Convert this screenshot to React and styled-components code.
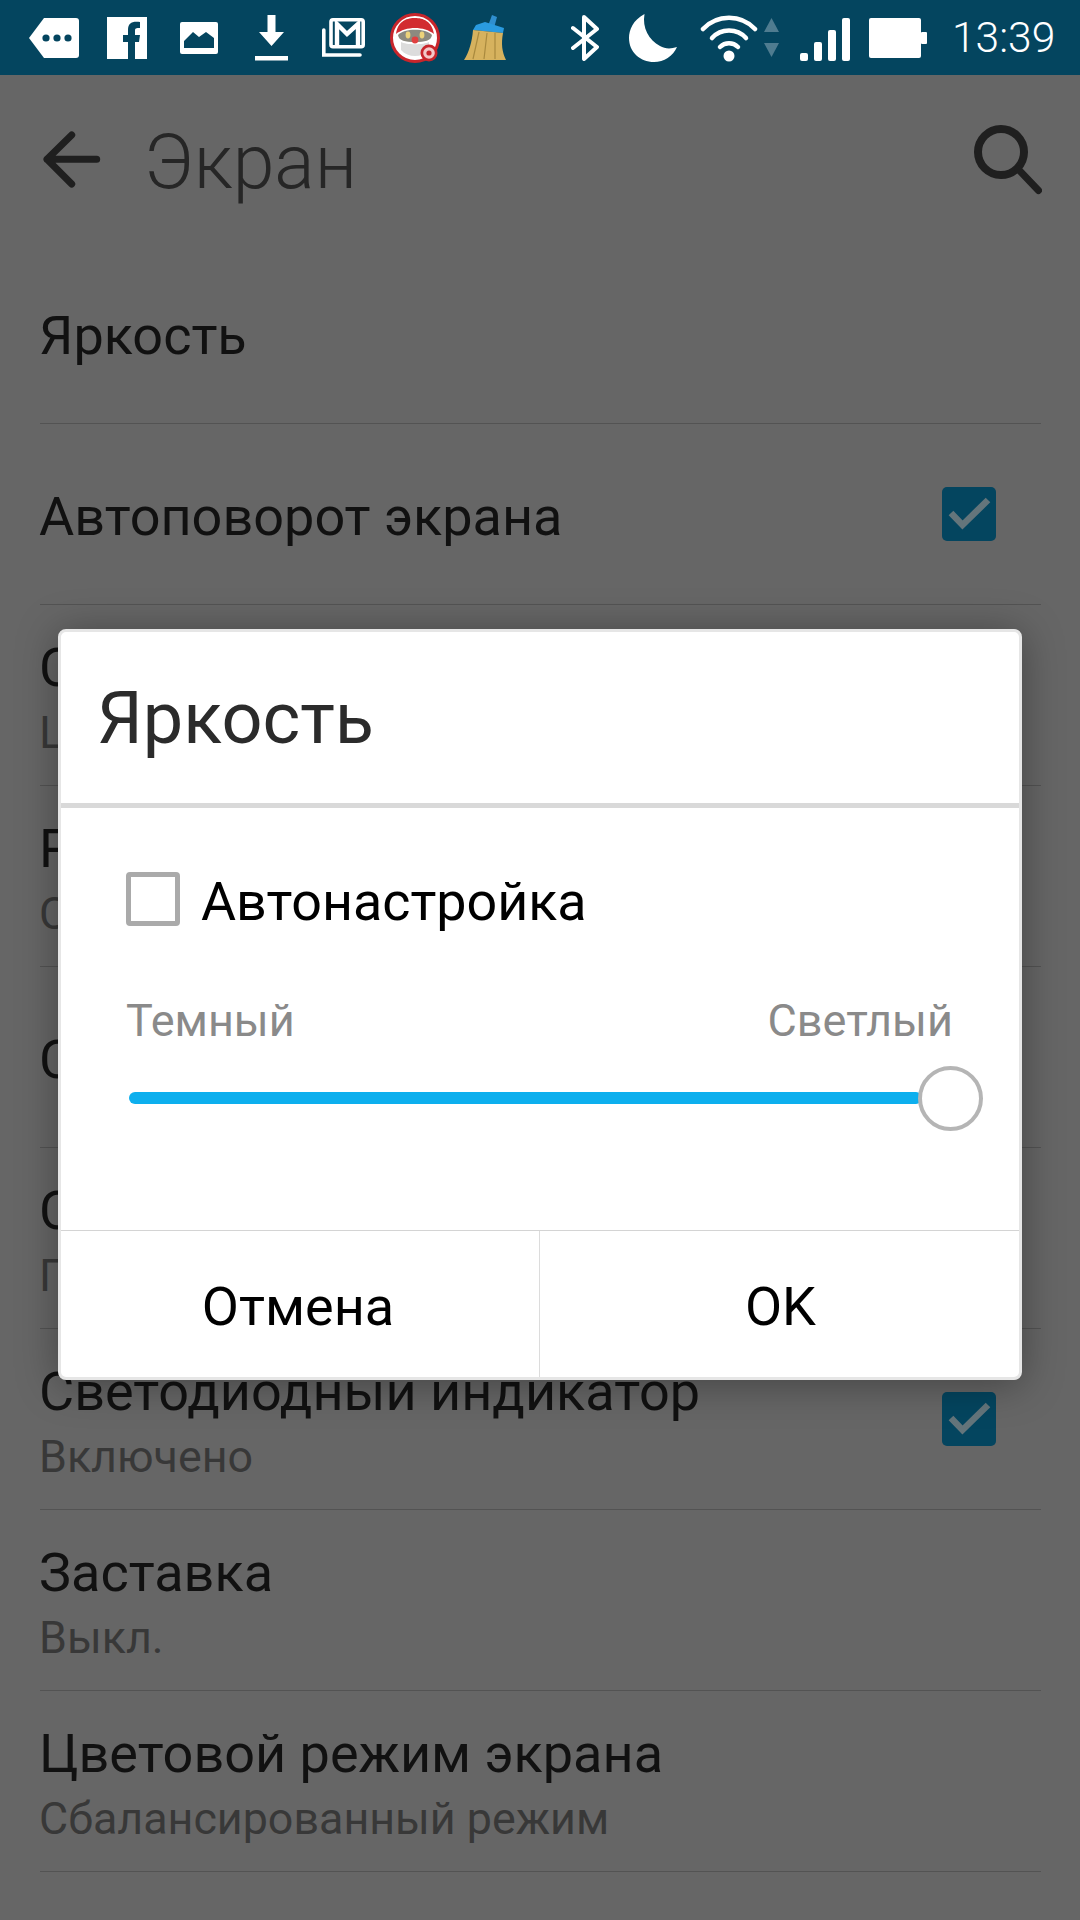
import styled, { createGlobalStyle } from 'styled-components';

const GlobalStyle = createGlobalStyle`
  html, body {
    margin: 0;
    padding: 0;
    background: #666666;
  }
  * {
    box-sizing: border-box;
  }
`;

const settings = [
  { title: 'Яркость' },
  { title: 'Автоповорот экрана', checked: true },
  { title: 'Спящий режим', sub: 'Ц' },
  { title: 'Размер шрифта', sub: 'Средний' },
  { title: 'Сон' },
  { title: 'Стиль', sub: 'По умолчанию' },
  { title: 'Светодиодный индикатор', sub: 'Включено', checked: true },
  { title: 'Заставка', sub: 'Выкл.' },
  { title: 'Цветовой режим экрана', sub: 'Сбалансированный режим' },
];

const BackIcon = () => (
  <svg width="60" height="60" viewBox="0 0 60 60" fill="none" stroke="#1f1f1f" strokeWidth="7" strokeLinecap="round" strokeLinejoin="round">
    <path d="M29.7 6 L5 30.3 L29.7 55 M5 30.3 H54.7" />
  </svg>
);

const SearchIcon = () => (
  <svg width="72" height="72" viewBox="0 0 72 72" fill="none" stroke="#1f1f1f" strokeLinecap="round">
    <circle cx="31" cy="29" r="23" strokeWidth="8" />
    <path d="M48 46 L68.5 67.5" strokeWidth="7" />
  </svg>
);

const CheckIcon = () => (
  <svg width="54" height="54" viewBox="0 0 54 54" fill="none">
    <rect width="54" height="54" rx="5" fill="#04455f" />
    <path d="M9 26 L20.5 38 L46 13" stroke="#64757b" strokeWidth="6.5" />
  </svg>
);

const TagIcon = () => (
  <svg width="50" height="40" viewBox="0 0 50 40" fill="#fff">
    <path d="M15 0 H47 a3 3 0 0 1 3 3 V37 a3 3 0 0 1 -3 3 H15 L0 20 Z" />
    <circle cx="17" cy="20" r="3.6" fill="#04455f" />
    <circle cx="28" cy="20" r="3.6" fill="#04455f" />
    <circle cx="39" cy="20" r="3.6" fill="#04455f" />
  </svg>
);

const FacebookIcon = () => (
  <svg width="40" height="42" viewBox="0 0 40 42">
    <rect width="40" height="42" fill="#fff" />
    <path d="M21 42 V25 H16 V18 H21 V13 C21 6 25 4 33 5 V11 C29 11 28 11 28 14 V18 H33 L32 25 H28 V42 Z" fill="#04455f" />
  </svg>
);

const PhotoIcon = () => (
  <svg width="38" height="32" viewBox="0 0 38 32">
    <rect width="38" height="32" rx="2" fill="#fff" />
    <path d="M4 26 V19 L13 10 L19 15 L26 10 L34 16 V26 Z" fill="#04455f" />
  </svg>
);

const DownloadIcon = () => (
  <svg width="33" height="46" viewBox="0 0 33 46" fill="#fff">
    <path d="M12.5 0 H20.5 V17 H29 L16.5 31 L4 17 H12.5 Z" />
    <rect y="41" width="33" height="4.5" />
  </svg>
);

const MailIcon = () => (
  <svg width="43" height="39" viewBox="0 0 43 39" fill="none" stroke="#fff" strokeWidth="3.6">
    <rect x="9" y="1.8" width="32.2" height="27" rx="2" />
    <path d="M1.8 12 V37 H38" strokeLinecap="round" />
    <path d="M15 27 V6 L25 16 L36 6 V27" strokeWidth="4.4" />
  </svg>
);

const RobotIcon = () => (
  <svg width="50" height="52" viewBox="0 0 50 52">
    <circle cx="25" cy="26" r="23.5" fill="#fff" stroke="#c8252b" strokeWidth="3" />
    <path d="M6 22 C8 8 18 6 25 6 C33 6 42 9 44 22 C34 14 16 14 6 22 Z" fill="#d22b30" />
    <path d="M8 23 C14 16 36 16 42 23 C41 29 35 30 25 30 C15 30 9 29 8 23 Z" fill="#8c8a80" />
    <ellipse cx="18" cy="23" rx="2.4" ry="3.4" fill="#ecd27a" />
    <ellipse cx="32" cy="23" rx="2.4" ry="3.4" fill="#ecd27a" />
    <path d="M11 30 C16 33 34 33 39 30 V38 C32 46 18 46 11 38 Z" fill="#dcdcdc" />
    <circle cx="25" cy="28" r="3.4" fill="#e04040" />
    <circle cx="39" cy="41" r="8.5" fill="#c8252b" />
    <circle cx="39" cy="41" r="5.8" fill="#f3c8c8" />
    <circle cx="39" cy="41" r="2.6" fill="#c8252b" />
  </svg>
);

const BroomIcon = () => (
  <svg width="42" height="46" viewBox="0 0 42 46">
    <path d="M28 0 L33 2 L30 13 L24 11 Z" fill="#2f8fd0" />
    <path d="M12 10 L21 7 L40 13 L39 18 L9 15 Z" fill="#2a9be0" />
    <path d="M9 15 L39 18 C37 29 38 37 42 45 H0 C5 37 8 27 9 15 Z" fill="#d6b25e" />
    <path d="M15 17 L9 44 M23 18 L20 44 M31 18 L31 44" stroke="#a98a3e" strokeWidth="1.2" fill="none" />
  </svg>
);

const BluetoothIcon = () => (
  <svg width="28" height="46" viewBox="0 0 28 46" fill="none" stroke="#fff" strokeWidth="4" strokeLinecap="round" strokeLinejoin="round">
    <path d="M2 13 L26 32 L13 44 V2 L26 14 L2 33" />
  </svg>
);

const MoonIcon = () => (
  <svg width="48" height="48" viewBox="0 0 48 48" fill="#fff">
    <path d="M15.5 0 C4 6 0 16 0 24 C0 38 11 48 25 48 C35 48 44 42 48 33 C42 35 36 35 31 32 C20 26 13 14 15.5 0 Z" />
  </svg>
);

const WifiIcon = () => (
  <svg width="58" height="48" viewBox="0 0 58 48" fill="none" stroke="#fff" strokeWidth="4.5" strokeLinecap="round">
    <path d="M3 15 C17 0 41 0 55 15" />
    <path d="M12 24 C21 14 37 14 46 24" />
    <path d="M20 33 C25 28 33 28 38 33" />
    <circle cx="29" cy="42" r="5.5" fill="#fff" stroke="none" />
  </svg>
);

const ArrowsIcon = () => (
  <svg width="15" height="39" viewBox="0 0 15 39" fill="#4f7c90">
    <path d="M7.5 0 L15 14 H0 Z" />
    <path d="M7.5 39 L0 25 H15 Z" />
  </svg>
);

const SignalIcon = () => (
  <svg width="50" height="43" viewBox="0 0 50 43" fill="#fff">
    <rect x="0" y="35" width="8" height="8" rx="2" />
    <rect x="14" y="24" width="8" height="19" rx="2" />
    <rect x="28" y="12" width="8" height="31" rx="2" />
    <rect x="42" y="0" width="8" height="43" rx="2" />
  </svg>
);

const BatteryIcon = () => (
  <svg width="58" height="40" viewBox="0 0 58 40" fill="#fff">
    <rect width="52" height="40" rx="2" />
    <rect x="52" y="14" width="6" height="12" rx="1" />
  </svg>
);

const App = () => (
  <>
    <GlobalStyle />
    <Phone>
      <StatusBar>
        <StatusSlot $gap={0}><TagIcon /></StatusSlot>
        <StatusSlot $gap={28}><FacebookIcon /></StatusSlot>
        <StatusSlot $gap={33}><PhotoIcon /></StatusSlot>
        <StatusSlot $gap={37}><DownloadIcon /></StatusSlot>
        <StatusSlot $gap={34}><MailIcon /></StatusSlot>
        <StatusSlot $gap={25}><RobotIcon /></StatusSlot>
        <StatusSlot $gap={24}><BroomIcon /></StatusSlot>
        <StatusSlot $gap={65}><BluetoothIcon /></StatusSlot>
        <StatusSlot $gap={30}><MoonIcon /></StatusSlot>
        <StatusSlot $gap={23}><WifiIcon /></StatusSlot>
        <StatusSlot $gap={6}><ArrowsIcon /></StatusSlot>
        <StatusSlot $gap={21} $drop={4}><SignalIcon /></StatusSlot>
        <StatusSlot $gap={19}><BatteryIcon /></StatusSlot>
        <Clock>13:39</Clock>
      </StatusBar>
      <Header>
        <BackIcon />
        <HeaderTitle>Экран</HeaderTitle>
        <SearchIcon />
      </Header>
      <SettingsList>
        {settings.map(item => (
          <SettingRow key={item.title}>
            <RowText>
              <RowTitle>{item.title}</RowTitle>
              {item.sub && <RowSub>{item.sub}</RowSub>}
            </RowText>
            {item.checked && <CheckIcon />}
          </SettingRow>
        ))}
      </SettingsList>
      <Dialog>
        <DialogTitle>Яркость</DialogTitle>
        <DialogBody>
          <AutoRow>
            <EmptyBox />
            <AutoLabel>Автонастройка</AutoLabel>
          </AutoRow>
          <SliderLabels>
            <span>Темный</span>
            <span>Светлый</span>
          </SliderLabels>
          <Slider>
            <SliderTrack />
            <SliderThumb />
          </Slider>
        </DialogBody>
        <DialogButtons>
          <DialogButton $shift={-2}>Отмена</DialogButton>
          <DialogButton $shift={1}>OK</DialogButton>
        </DialogButtons>
      </Dialog>
    </Phone>
  </>
);

const Phone = styled.div`
  position: relative;
  width: 1080px;
  height: 1920px;
  overflow: hidden;
  background: #666666;
  font-family: Roboto, 'Noto Sans', sans-serif;
`;

const StatusBar = styled.div`
  display: flex;
  align-items: center;
  height: 75px;
  padding-left: 29px;
  background: #04455f;
`;

const StatusSlot = styled.div`
  display: flex;
  margin-left: ${props => props.$gap}px;
  margin-top: ${props => props.$drop || 0}px;
`;

const Clock = styled.span`
  margin-left: 25px;
  color: #fff;
  font-size: 42.5px;
  font-weight: 300;
`;

const Header = styled.div`
  display: flex;
  align-items: center;
  height: 168px;
  padding: 0 38px 0 42px;
`;

const HeaderTitle = styled.h1`
  flex: 1;
  margin: 6px 0 0 42px;
  color: #262626;
  font-size: 75.2px;
  font-weight: 300;
`;

const SettingsList = styled.div`
  padding: 0 39px 0 40px;
`;

const SettingRow = styled.div`
  display: flex;
  align-items: center;
  justify-content: space-between;
  height: 181px;
  padding-right: 45px;
  border-bottom: 1px solid #535353;
`;

const RowText = styled.div`
  margin-left: -1px;
  padding-top: 6px;
`;

const RowTitle = styled.div`
  color: #111;
  font-size: 54px;
  line-height: 62px;
`;

const RowSub = styled.div`
  margin-top: 7px;
  color: #383838;
  font-size: 44.8px;
  line-height: 54px;
`;

const Dialog = styled.div`
  position: absolute;
  top: 629px;
  left: 58px;
  display: flex;
  flex-direction: column;
  width: 964px;
  height: 751px;
  overflow: hidden;
  border: 3px solid #e6e6e6;
  border-radius: 8px;
  background: #fff;
  box-shadow: 0 4px 40px rgba(0, 0, 0, 0.35);
`;

const DialogTitle = styled.div`
  display: flex;
  align-items: center;
  height: 176px;
  padding: 2px 0 0 36px;
  border-bottom: 5px solid #d9d9d9;
  color: #2b2b2b;
  font-size: 72px;
`;

const DialogBody = styled.div`
  flex: 1;
  padding: 60px 66px 0 65px;
`;

const AutoRow = styled.div`
  display: flex;
  align-items: center;
  gap: 21px;
`;

const EmptyBox = styled.div`
  width: 54px;
  height: 54px;
  border: 5px solid #aaaaaa;
  border-radius: 4px;
`;

const AutoLabel = styled.span`
  margin-top: 6px;
  color: #000;
  font-size: 53.8px;
  line-height: 56px;
`;

const SliderLabels = styled.div`
  display: flex;
  justify-content: space-between;
  margin-top: 65px;
  color: #8a8a8a;
  font-size: 45px;
  line-height: 52px;
`;

const Slider = styled.div`
  position: relative;
  height: 65px;
  margin-top: 19px;
`;

const SliderTrack = styled.div`
  position: absolute;
  top: 26px;
  left: 3px;
  right: 31px;
  height: 12px;
  border-radius: 6px;
  background: #0dafee;
`;

const SliderThumb = styled.div`
  position: absolute;
  top: 0;
  right: -30px;
  width: 65px;
  height: 65px;
  border: 4px solid #b5b5b5;
  border-radius: 50%;
  background: #fff;
`;

const DialogButtons = styled.div`
  display: grid;
  grid-template-columns: 478px 1fr;
  height: 147px;
  border-top: 1px solid #d4d4d4;
`;

const DialogButton = styled.div`
  display: flex;
  align-items: center;
  justify-content: center;
  padding-top: 4px;
  padding-left: ${props => (props.$shift > 0 ? props.$shift * 2 : 0)}px;
  padding-right: ${props => (props.$shift < 0 ? -props.$shift * 2 : 0)}px;
  color: #000;
  font-size: 54px;

  & + & {
    border-left: 1px solid #dcdcdc;
  }
`;

export default App;
